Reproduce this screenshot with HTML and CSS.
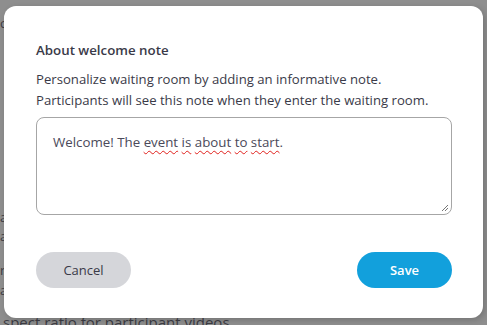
FILE: index.html
```html
<!DOCTYPE html>
<html>
<head>
<meta charset="utf-8">
<link rel="stylesheet" href="styles.css">
</head>
<body>
<div class="page">
  <div class="bg-text t1">c</div>
  <div class="bg-text t2">al</div>
  <div class="bg-text t3">a</div>
  <div class="bg-text t4">r</div>
  <div class="bg-text t5">a</div>
  <div class="bg-text t6">spect ratio for participant videos</div>
</div>
<div class="overlay">
  <div class="dialog">
    <h2 class="title">About welcome note</h2>
    <p class="desc">Personalize waiting room by adding an informative note.<br>Participants will see this note when they enter the waiting room.</p>
    <div class="note">
      <span>Welcome! The <span class="sp">event</span> <span class="sp">is</span> <span class="sp">about</span> <span class="sp">to</span> <span class="sp">start</span>.</span>
      <svg class="grip" width="8" height="8" viewBox="0 0 8 8"><path d="M7 1 L1 7 M7 4 L4 7" stroke="#777" stroke-width="1"/></svg>
    </div>
    <div class="actions">
      <button class="btn cancel">Cancel</button>
      <button class="btn save">Save</button>
    </div>
  </div>
</div>
</body>
</html>
```
FILE: styles.css
```css
* { box-sizing: border-box; }
html, body { margin: 0; padding: 0; }
body {
  width: 487px;
  height: 325px;
  overflow: hidden;
  position: relative;
  background: #8c8c8c;
  font-family: "Open Sans", "Noto Sans", sans-serif;
}
.page { position: absolute; inset: 0; background: #8e8e8e; }
.bg-text { position: absolute; left: 0; color: #3c3c44; font-size: 13px; line-height: 16px; }
.t1 { top: 15px; }
.t2 { top: 209px; }
.t3 { top: 228px; }
.t4 { top: 262px; }
.t5 { top: 282px; }
.t6 { top: 314px; left: 3px; font-size: 15px; }
.overlay {
  position: absolute;
  inset: 0;
  padding: 6px 4px 7px 4px;
}
.dialog {
  width: 479px;
  height: 312px;
  background: #fff;
  border-radius: 12px;
  box-shadow: 2px 2px 6px rgba(0,0,0,0.18);
  padding: 35px 31px 0 32px;
  display: flex;
  flex-direction: column;
}
.title {
  margin: 0;
  font-size: 13.3px;
  font-weight: 600;
  color: #3a3a48;
  line-height: 18px;
}
.desc {
  margin: 10px 0 0 0;
  font-size: 13.15px;
  line-height: 21px;
  color: #3a3a48;
}
.note {
  position: relative;
  margin-top: 6px;
  height: 98px;
  border: 1px solid #a6a6a6;
  border-radius: 8px;
  padding: 14px 16px;
  font-size: 13.3px;
  line-height: 20px;
  color: #4a4a5a;
}
.sp {
  text-decoration: underline wavy #e0201c;
  text-decoration-thickness: 1px;
  text-underline-offset: 3px;
}
.grip { position: absolute; right: 2px; bottom: 2px; }
.actions {
  margin-top: 37px;
  display: flex;
  justify-content: space-between;
}
.btn {
  width: 95px;
  height: 36px;
  border: none;
  border-radius: 18px;
  font-family: "Open Sans", "Noto Sans", sans-serif;
  font-size: 13px;
  cursor: pointer;
}
.cancel { background: #d5d6da; color: #3a3a48; }
.save { background: #12a0dc; color: #fff; font-weight: 600; }
```
